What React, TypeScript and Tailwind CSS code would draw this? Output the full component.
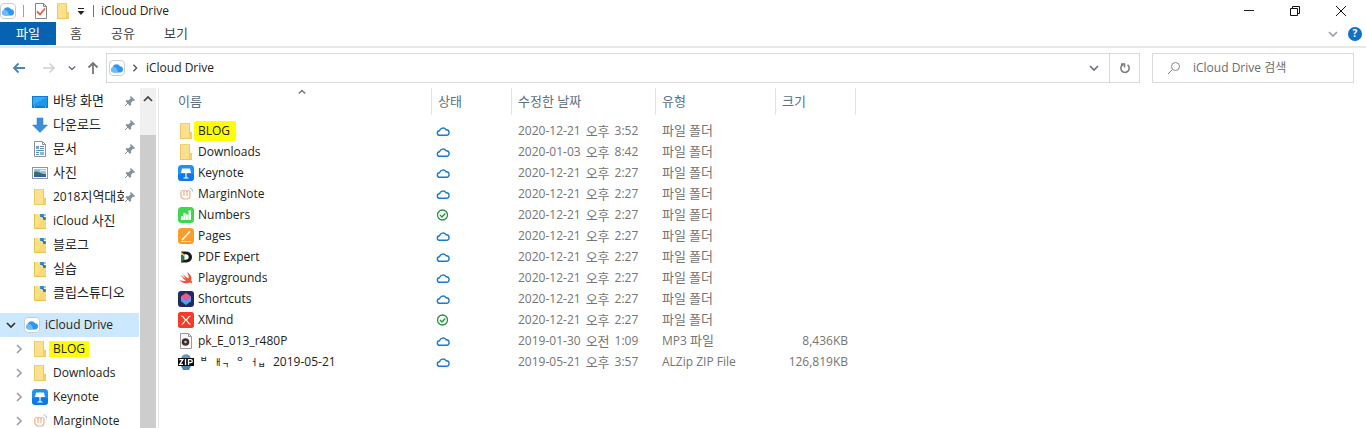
import React, { useState } from "react";
import type { ReactNode } from "react";

type IconName =
  | "desktop"
  | "download"
  | "document"
  | "picture"
  | "folder"
  | "sharedFolder"
  | "drive"
  | "keynote"
  | "marginnote"
  | "numbers"
  | "pages"
  | "pdf"
  | "swift"
  | "shortcuts"
  | "xmind"
  | "mp3"
  | "zip";

type FileRow = {
  name: string;
  icon: IconName;
  synced?: boolean;
  date: string;
  type: string;
  size?: string;
};

const quickAccess: { name: string; icon: IconName; pinned?: boolean }[] = [
  { name: "바탕 화면", icon: "desktop", pinned: true },
  { name: "다운로드", icon: "download", pinned: true },
  { name: "문서", icon: "document", pinned: true },
  { name: "사진", icon: "picture", pinned: true },
  { name: "2018지역대회", icon: "folder", pinned: true },
  { name: "iCloud 사진", icon: "sharedFolder" },
  { name: "블로그", icon: "sharedFolder" },
  { name: "실습", icon: "sharedFolder" },
  { name: "클립스튜디오", icon: "sharedFolder" },
];

const driveTree: { name: string; icon: IconName }[] = [
  { name: "BLOG", icon: "folder" },
  { name: "Downloads", icon: "folder" },
  { name: "Keynote", icon: "keynote" },
  { name: "MarginNote", icon: "marginnote" },
];

const files: FileRow[] = [
  { name: "BLOG", icon: "folder", date: "2020-12-21 오후 3:52", type: "파일 폴더" },
  { name: "Downloads", icon: "folder", date: "2020-01-03 오후 8:42", type: "파일 폴더" },
  { name: "Keynote", icon: "keynote", date: "2020-12-21 오후 2:27", type: "파일 폴더" },
  { name: "MarginNote", icon: "marginnote", date: "2020-12-21 오후 2:27", type: "파일 폴더" },
  { name: "Numbers", icon: "numbers", synced: true, date: "2020-12-21 오후 2:27", type: "파일 폴더" },
  { name: "Pages", icon: "pages", date: "2020-12-21 오후 2:27", type: "파일 폴더" },
  { name: "PDF Expert", icon: "pdf", date: "2020-12-21 오후 2:27", type: "파일 폴더" },
  { name: "Playgrounds", icon: "swift", date: "2020-12-21 오후 2:27", type: "파일 폴더" },
  { name: "Shortcuts", icon: "shortcuts", date: "2020-12-21 오후 2:27", type: "파일 폴더" },
  { name: "XMind", icon: "xmind", synced: true, date: "2020-12-21 오후 2:27", type: "파일 폴더" },
  { name: "pk_E_013_r480P", icon: "mp3", date: "2019-01-30 오전 1:09", type: "MP3 파일", size: "8,436KB" },
  { name: "2019-05-21", icon: "zip", date: "2019-05-21 오후 3:57", type: "ALZip ZIP File", size: "126,819KB" },
];

const iconArt: Record<IconName, ReactNode> = {
  desktop: (
    <>
      <rect x="0" y="3" width="16" height="12" fill="#0f7ad0" />
      <path d="M1 4h14v9H1z" fill="#1c97ea" />
      <path d="M1 4h14L1 12z" fill="#35aaf5" />
      <path d="M2 14h1M13 14h1" stroke="#bfe2fa" />
    </>
  ),
  download: <path d="M5 1h6v7h4.500L8 15.500.500 8H5z" fill="#3b8fdc" stroke="#2b7cc7" strokeWidth=".5" />,
  document: (
    <>
      <path d="M2.500.500h8l3 3v12h-11z" fill="#fff" stroke="#8a9297" />
      <path d="M10.500.500v3h3" fill="none" stroke="#8a9297" />
      <path d="M4 5h3v3H4z" fill="#6fa4c6" />
      <path d="M8 5.500h4M8 7.500h4M4 9.500h8M4 11.500h3M4 13.500h3" stroke="#5b94b8" />
      <path d="M8 11h4v3H8z" fill="#8ab8d3" />
    </>
  ),
  picture: (
    <>
      <rect x=".5" y="2.500" width="15" height="11" fill="#fff" stroke="#8d979c" />
      <path d="M2 4h12v8H2z" fill="#8cc3ec" />
      <path d="M2 7c4-2 6 2 12 2v3H2z" fill="#3d6f68" />
      <path d="M2 10c4 0 7-1 12 1v1H2z" fill="#2f5fa5" />
      <path d="M8 6c2-1 4-1 6 0" stroke="#fff" fill="none" />
    </>
  ),
  folder: (
    <>
      <path d="M2 0h10v16H2z" fill="#fce08b" />
      <path d="M11 9.500L14 8.500V16h-3z" fill="#f4cf6d" />
      <path d="M11.500 1v9" stroke="#efc964" />
      <path d="M2.500 0v15.500H14" fill="none" stroke="#ecc766" />
      <path d="M2 .5h10" stroke="#f0d07a" />
    </>
  ),
  sharedFolder: (
    <>
      <path d="M2 1h9v14.500H2z" fill="#fce182" />
      <path d="M11 6l3 1v8.500H2.500z" fill="#f6d97a" />
      <path d="M2.500 1v14.500H14" fill="none" stroke="#e5c053" />
      <path d="M8 1h4v3H8zM11 4h3v3h-3z" fill="#3d8cc9" />
      <path d="M9 3l4 3" stroke="#276ba6" />
      <path d="M12 1h2v2h-2z" fill="#a5cce5" />
    </>
  ),
  drive: (
    <>
      <rect x=".5" y=".5" width="15" height="15" rx="3.500" fill="#fff" stroke="#c9ced3" />
      <path
        d="M4.300 12.500A2.900 2.900 0 0 1 3.700 7 4 4 0 0 1 11 6.200 3.200 3.200 0 0 1 11.600 12.500z"
        fill="#2f97f3"
      />
      <path d="M4.300 12.500A2.900 2.900 0 0 1 3.700 7C7 6.500 8.500 9 9 12.500z" fill="#6dbcfa" />
    </>
  ),
  keynote: (
    <>
      <rect width="16" height="16" rx="3.500" fill="#1b93f3" />
      <path d="M0 9h16v3.500a3.500 3.500 0 0 1-3.500 3.500h-9A3.500 3.500 0 0 1 0 12.500z" fill="#0f79e4" />
      <path d="M4 3.500h8l1 4.500H3z" fill="#fff" />
      <path d="M8 8v5M5.500 13h5" stroke="#fff" strokeWidth="1.200" />
    </>
  ),
  marginnote: (
    <>
      <path d="M3 5.500c-.5 4 0 7.500 3 7.500h3c2.500 0 3-2 3-4V5.500" fill="none" stroke="#f0ae8c" strokeWidth="1.200" />
      <path d="M6 5v5M9 5v5" stroke="#edba78" strokeWidth="1.200" />
      <path d="M3 5.500C3.500 4 5.500 4 6 5.500 6.500 4 8.500 4 9 5.500c.5-1.500 2.500-1.500 3 0" fill="none" stroke="#ef9d91" />
      <path d="M11.500 2c2 0 3 1.500 3 3.500" fill="none" stroke="#83cbd5" />
    </>
  ),
  numbers: (
    <>
      <rect width="16" height="16" rx="3.500" fill="#3fd74c" />
      <path d="M3 9h2.200v4H3zM5.500 6h2.200v7H5.500zM8 7.500h2.200V13H8zM10.500 3.500h2.500V13h-2.500z" fill="#fff" />
    </>
  ),
  pages: (
    <>
      <rect width="16" height="16" rx="3.500" fill="#fb9d28" />
      <path d="M3 13.500h10" stroke="#ffe2b6" />
      <path d="M4 12l8-8.500" stroke="#fff" strokeWidth="1.500" />
    </>
  ),
  pdf: (
    <>
      <path
        d="M3 2.500h4.500C11.500 2.500 14 4.700 14 8s-2.500 5.500-6.500 5.500H3zm3.200 2.700v5.600h1.300C9.500 10.800 10.700 9.800 10.700 8S9.500 5.200 7.500 5.200z"
        fill="#171b1e"
      />
      <path d="M3 2.500l3.200 2.700v2L3 6z" fill="#eac23c" />
      <path d="M3 6l3.200 1.200v3.600L3 13.500z" fill="#327a45" />
    </>
  ),
  swift: (
    <path
      d="M9 2c4 2.500 5 5.500 4.200 8.200 1 1.300 1 2.600.6 3.300-1-1.200-2-1-2.800-.6C7 14.300 3.200 12.500 1.500 9.800c2.200 1.300 4.500 1.700 6.300.9C5.500 9 3.500 6.500 2.500 4.700c2 1.800 4.200 3.300 5.500 4C6.500 7 5.200 5 4.500 3.800c2 1.900 4.500 4 6 4.700C11 6.300 10.300 4 9 2z"
      fill="#f0553a"
    />
  ),
  shortcuts: (
    <>
      <rect width="16" height="16" rx="3" fill="#222b60" />
      <path d="M8 2l5 3.300-5 3.700-5-3.700z" fill="#ef5a85" />
      <path d="M3 5.300L8 9l5-3.700v5L8 14l-5-3.700z" fill="#35afe3" />
      <path d="M3 5.300L8 9l5-3.700V8l-5 3.500L3 8z" fill="#a47be0" />
    </>
  ),
  xmind: (
    <>
      <rect width="16" height="16" rx="2.500" fill="#f33d28" />
      <path
        d="M3.500 4c2.500 0 3 4 4.500 4s2-4 4.500-4M3.500 12.500C6 12.500 6.500 8 8 8s2 4.500 4.500 4.500"
        fill="none"
        stroke="#fff"
        strokeWidth="1.200"
      />
    </>
  ),
  mp3: (
    <>
      <path d="M2.500.500h8l3 3v12h-11z" fill="#fbfbfb" stroke="#9a9a9a" />
      <path d="M10.500.500v3h3" fill="none" stroke="#9a9a9a" />
      <circle cx="7.500" cy="9" r="3.800" fill="#3b302f" />
      <circle cx="7.500" cy="9" r="1.300" fill="#e2b5a5" />
    </>
  ),
  zip: (
    <>
      <circle cx="8" cy="5" r="4.800" fill="#5b9bc4" />
      <path d="M3 12h10l-2 4H5z" fill="#4b82b4" />
      <path d="M0 4h16v8H0z" fill="#0d0d0d" />
      <path
        d="M1.500 5.700h3.300L1.800 10.400h3.200M7.500 5v6M10.500 11V5.700h2.300a1.300 1.300 0 0 1 0 2.900h-2.300"
        fill="none"
        stroke="#fff"
        strokeWidth="1.300"
      />
    </>
  ),
};

const Icon = ({ name }: { name: IconName }) => (
  <svg viewBox="0 0 16 16" className="size-4 shrink-0" aria-hidden="true">
    {iconArt[name]}
  </svg>
);

const Chevron = ({ dir, className }: { dir: "down" | "up" | "right"; className: string }) => {
  const d = { down: "M1 3l4 4 4-4", up: "M1 7l4-4 4 4", right: "M3 1l4 4-4 4" }[dir];
  return (
    <svg viewBox="0 0 10 10" className={className} fill="none" stroke="currentColor" aria-hidden="true">
      <path d={d} strokeWidth="1.700" />
    </svg>
  );
};

const Pin = () => (
  <svg viewBox="0 0 12 12" className="size-3 shrink-0" aria-hidden="true">
    <path d="M7 1l4 4-1 1-1-.3-2 2 .2 2L6 11 1.500 6.300l1.200-1.200 2 .2 2-2L6 2z" fill="#8592a0" />
    <path d="M4 8l-3 3" stroke="#8592a0" />
  </svg>
);

// Hangul is set one pixel larger than the Latin text beside it
const Label = ({ text }: { text: string }) => (
  <>
    {text.split(/([가-힣]+)/).map((part, i) =>
      i % 2 ? (
        <span key={i} className="text-[13px]">
          {part}
        </span>
      ) : (
        part
      ),
    )}
  </>
);

const DateCell = ({ date }: { date: string }) => {
  const [day, half, time] = date.split(" ");
  return (
    <div className="flex items-center gap-[5px]">
      <span>{day}</span>
      <span className="text-[13px] leading-4">{half}</span>
      <span>{time}</span>
    </div>
  );
};

const Status = ({ synced }: { synced?: boolean }) =>
  synced ? (
    <svg viewBox="0 0 14 14" className="size-3.5" fill="none" stroke="#259142" role="img" aria-label="동기화됨">
      <circle cx="6.500" cy="7" r="5" strokeWidth="1.300" />
      <path d="M4 7l2 2 3.300-3.500" strokeWidth="1.300" />
    </svg>
  ) : (
    <svg viewBox="0 0 14 14" className="size-3.5" fill="none" stroke="#1a7bcb" role="img" aria-label="온라인">
      <path
        d="M3.800 11.300a2.300 2.300 0 0 1-.3-4.600A3.600 3.600 0 0 1 10 5.700a2.800 2.800 0 0 1 .5 5.600z"
        strokeWidth="1.400"
      />
    </svg>
  );

const DecomposedName = () => (
  <span className="flex h-3.5 w-[75px] shrink-0 gap-[7px] pl-0.5 text-[8px] leading-[8px] font-medium">
    <span className="self-start">ㅂ</span>
    <span className="flex">
      <span className="self-center">ㅐ</span>
      <span className="self-end">ㄱ</span>
    </span>
    <span className="self-start">ㅇ</span>
    <span className="flex">
      <span className="self-center">ㅓ</span>
      <span className="self-end">ㅂ</span>
    </span>
  </span>
);

const TitleBar = () => (
  <header className="flex h-[22px] shrink-0 items-center pr-0.5">
    <Icon name="drive" />
    <span className="ml-[7px] h-3 w-px bg-gray-400" />
    <button className="ml-[9px] flex size-4" aria-label="속성">
      <svg viewBox="0 0 16 16" className="size-4">
        <path d="M2.500.500h8l3 3v12h-11z" fill="#fff" stroke="#858585" />
        <path d="M10.500.500v3h3" fill="none" stroke="#858585" />
        <path d="M4 8.500l3 3 5-6" fill="none" stroke="#e0623a" strokeWidth="1.800" />
      </svg>
    </button>
    <button className="ml-1.5 flex size-4" aria-label="새 폴더">
      <Icon name="folder" />
    </button>
    <button className="ml-1.5 flex" aria-label="빠른 실행 도구 모음 사용자 지정">
      <svg viewBox="0 0 8 8" className="size-2" fill="#222">
        <path d="M1 1h6v1H1zM.5 4h7L4 8z" />
      </svg>
    </button>
    <span className="ml-2 h-3 w-px bg-gray-500" />
    <h1 className="ml-[7px] grow">iCloud Drive</h1>
    <button className="flex w-[46px] justify-center" aria-label="최소화">
      <svg viewBox="0 0 12 12" className="size-3" stroke="#222">
        <path d="M1 5.500h10" />
      </svg>
    </button>
    <button className="flex w-[46px] justify-center" aria-label="이전 크기로 복원">
      <svg viewBox="0 0 12 12" className="size-3" fill="none" stroke="#111">
        <path d="M1.500 3.500h7v7h-7zM3.500 3V1.500h7v7H9" />
      </svg>
    </button>
    <button className="flex w-[46px] justify-center" aria-label="닫기">
      <svg viewBox="0 0 12 12" className="size-3" stroke="#111">
        <path d="M1 1l10 10M11 1L1 11" />
      </svg>
    </button>
  </header>
);

const Ribbon = () => (
  <div className="flex h-[26px] shrink-0 items-start border-b-2 border-[#e8e8e8] text-[13px] text-[#444]">
    <button className="h-[23px] w-14 bg-[#0563b1] text-white">파일</button>
    <button className="h-[23px] w-10">홈</button>
    <button className="h-[23px] w-[54px]">공유</button>
    <button className="h-[23px] w-[52px]">보기</button>
    <div className="ml-auto flex h-6 items-center gap-2.5 pr-1">
      <button className="flex" aria-label="리본 최소화">
        <Chevron dir="down" className="size-2.5 text-gray-400" />
      </button>
      <button
        className="flex size-3.5 items-center justify-center rounded-full bg-[#0f70c4] text-[10px] font-bold text-white"
        aria-label="도움말"
      >
        ?
      </button>
    </div>
  </div>
);

const AddressBar = () => {
  const [query, setQuery] = useState("");
  return (
    <div className="flex h-10 shrink-0 items-center pr-3">
      <nav className="flex w-[106px] items-center pl-3">
        <button className="flex" aria-label="뒤로">
          <svg viewBox="0 0 14 14" className="size-3.5" fill="none" stroke="#4784b8" strokeWidth="1.800">
            <path d="M13 7H2M6.500 2.500L2 7l4.500 4.500" />
          </svg>
        </button>
        <button className="ml-4 flex" aria-label="앞으로">
          <svg viewBox="0 0 14 14" className="size-3.5" fill="none" stroke="#d0d0d0" strokeWidth="1.500">
            <path d="M1 7h11M7.500 2.500L12 7l-4.500 4.500" />
          </svg>
        </button>
        <button className="ml-3 flex" aria-label="최근 위치">
          <Chevron dir="down" className="size-2 text-gray-500" />
        </button>
        <button className="ml-2.5 flex" aria-label="위로">
          <svg viewBox="0 0 14 14" className="size-3.5" fill="none" stroke="#777" strokeWidth="1.800">
            <path d="M7 13V2M2.500 6.500L7 2l4.500 4.500" />
          </svg>
        </button>
      </nav>
      <div className="flex h-[30px] grow items-center border border-[#d9d9d9] pl-0.5">
        <Icon name="drive" />
        <Chevron dir="right" className="mx-1.5 size-2 text-gray-600" />
        <button className="ml-px">iCloud Drive</button>
        <button className="mr-2.5 ml-auto flex" aria-label="이전 위치">
          <Chevron dir="down" className="size-2.5 text-gray-500" />
        </button>
        <button
          className="flex h-full w-[30px] items-center justify-center border-l border-[#d9d9d9]"
          aria-label="새로 고침"
        >
          <svg viewBox="0 0 12 12" className="size-3" fill="none" stroke="#777" strokeWidth="1.500">
            <path d="M8.500 2.800a4.200 4.200 0 1 1-4.500-.3M2 2h3.500v3.500" />
          </svg>
        </button>
      </div>
      <label className="ml-3 flex h-[30px] w-[202px] items-center border border-[#d9d9d9] pl-3.5 text-[#666]">
        <svg viewBox="0 0 14 14" className="size-3.5 shrink-0" fill="none" stroke="#888">
          <circle cx="8.500" cy="5.500" r="4" />
          <path d="M5.500 8.500L1 13" />
        </svg>
        <input
          className="ml-3 w-full min-w-0 outline-none placeholder:text-[#6b6b6b]"
          type="search"
          aria-label="iCloud Drive 검색"
          placeholder="iCloud Drive 검색"
          value={query}
          onChange={(e) => setQuery(e.target.value)}
        />
      </label>
    </div>
  );
};

const SidePanel = () => (
  <aside className="flex w-[159px] shrink-0 border-r border-[#e5e5e5]">
    <nav className="w-[139px] pt-px">
      <ul>
        {quickAccess.map((item) => (
          <li key={item.name}>
            <a href="#" className="flex h-6 items-center pr-[3px] pl-8">
              <Icon name={item.icon} />
              <span className="ml-[5px] grow overflow-hidden whitespace-nowrap">
                <Label text={item.name} />
              </span>
              {item.pinned && <Pin />}
            </a>
          </li>
        ))}
      </ul>
      <a href="#" className="mt-2 flex h-6 items-center bg-[#cce8ff] pl-1.5">
        <Chevron dir="down" className="size-2.5 text-[#333]" />
        <span className="ml-2 flex">
          <Icon name="drive" />
        </span>
        <span className="ml-[5px]">iCloud Drive</span>
      </a>
      <ul>
        {driveTree.map((item) => (
          <li key={item.name}>
            <a href="#" className="flex h-6 items-center pl-3.5">
              <Chevron dir="right" className="mr-2 size-2.5 text-gray-400" />
              <Icon name={item.icon} />
              <span className={item.name === "BLOG" ? "ml-px bg-[#ffff00] px-1 leading-4" : "ml-[5px]"}>
                {item.name}
              </span>
            </a>
          </li>
        ))}
      </ul>
    </nav>
    <div className="ml-px flex w-4 flex-col bg-[#f0f0f0]">
      <button className="flex h-[47px] justify-center pt-1.5" aria-label="위로 스크롤">
        <Chevron dir="up" className="size-2.5 text-[#444]" />
      </button>
      <div className="grow bg-[#cdcdcd]" />
    </div>
  </aside>
);

const FileTable = () => (
  <main className="grow overflow-hidden">
    <table className="w-[697px] table-fixed text-left whitespace-nowrap text-[#757575]">
      <colgroup>
        <col />
        <col className="w-20" />
        <col className="w-36" />
        <col className="w-[120px]" />
        <col className="w-20" />
      </colgroup>
      <thead className="text-[13px] text-[#5c6f85]">
        <tr className="h-8 align-top">
          <th className="p-0 font-normal" aria-sort="ascending">
            <div className="flex h-[27px] items-center border-r border-[#e3e3e3] pl-[19px]">
              이름
              <Chevron dir="up" className="ml-24 size-2 self-start text-gray-500" />
            </div>
          </th>
          {["상태", "수정한 날짜", "유형", "크기"].map((title) => (
            <th key={title} className="p-0 font-normal">
              <div className="flex h-[27px] items-center border-r border-[#e3e3e3] pl-1.5">{title}</div>
            </th>
          ))}
        </tr>
      </thead>
      <tbody>
        {files.map((file) => (
          <tr key={file.name} className="h-[21px]">
            <td className="p-0 text-[#222]">
              <div className="flex h-[21px] items-center pl-[19px]">
                <Icon name={file.icon} />
                {file.name === "BLOG" ? (
                  <span className="rounded-xs bg-[#ffff00] pr-1.5 pl-1 leading-5">{file.name}</span>
                ) : (
                  <span className="ml-1 flex items-center">
                    {file.icon === "zip" && <DecomposedName />}
                    {file.name}
                  </span>
                )}
              </div>
            </td>
            <td className="p-0 pl-1">
              <Status synced={file.synced} />
            </td>
            <td className="p-0 pl-1.5">
              <DateCell date={file.date} />
            </td>
            <td className="p-0 pl-1.5">
              <Label text={file.type} />
            </td>
            <td className="p-0 pr-2 text-right">{file.size}</td>
          </tr>
        ))}
      </tbody>
    </table>
  </main>
);

const App = () => {
  return (
    <div className="flex h-screen flex-col overflow-hidden bg-white font-['Open_Sans','Noto_Sans_CJK_KR',sans-serif] text-xs text-[#222]">
      <TitleBar />
      <Ribbon />
      <AddressBar />
      <div className="flex min-h-0 grow">
        <SidePanel />
        <FileTable />
      </div>
    </div>
  );
};

export default App;
